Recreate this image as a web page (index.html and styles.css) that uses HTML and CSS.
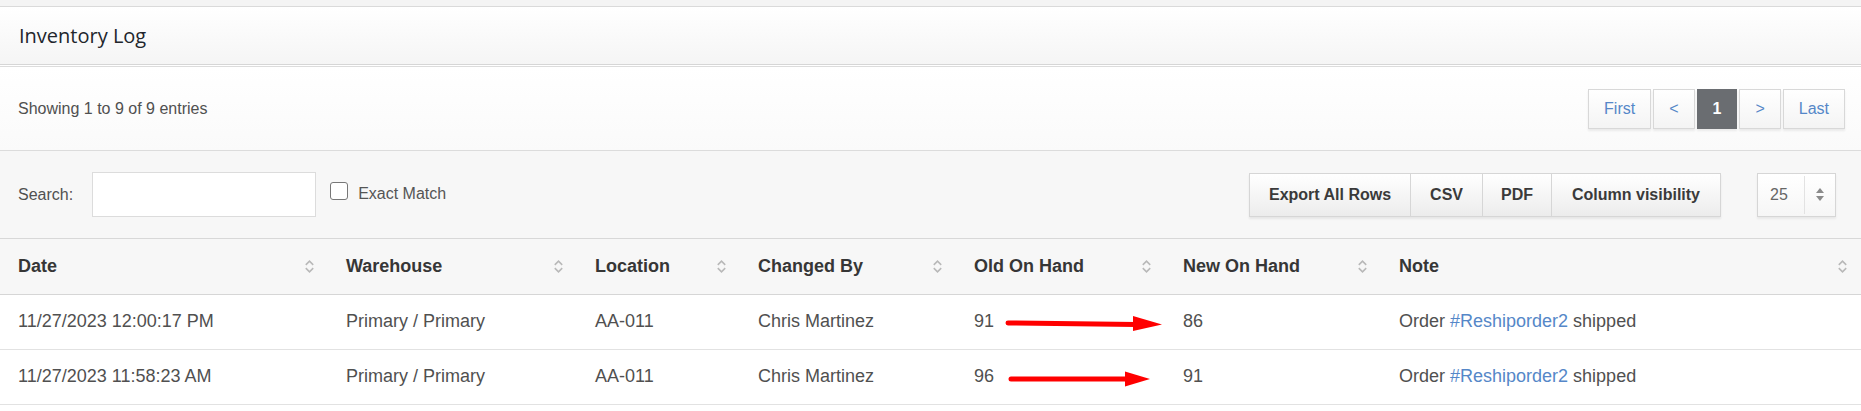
FILE: index.html
```html
<!DOCTYPE html>
<html lang="en">
<head>
    <meta charset="UTF-8">
    <meta name="viewport" content="width=device-width, initial-scale=1.0">
    <title>Inventory Log</title>
    <link rel="stylesheet" href="styles.css">
</head>
<body>
    <div class="panel">
        <div class="panel-heading">
            <h3>Inventory Log</h3>
        </div>

        <div class="panel-body">
            <div class="info-bar">
                <p class="info">Showing 1 to 9 of 9 entries</p>
                <ul class="pagination">
                    <li><a href="#">First</a></li>
                    <li><a href="#">&lt;</a></li>
                    <li class="active"><a href="#">1</a></li>
                    <li><a href="#">&gt;</a></li>
                    <li><a href="#">Last</a></li>
                </ul>
            </div>

            <div class="toolbar">
                <label class="search">Search: <input type="text"></label>
                <label class="exact"><span class="checkbox"></span>Exact Match</label>

                <div class="buttons">
                    <button>Export All Rows</button>
                    <button class="csv">CSV</button>
                    <button>PDF</button>
                    <button>Column visibility</button>
                </div>

                <div class="page-size">
                    <span class="value">25</span>
                    <span class="spinner"><i class="up"></i><i class="down"></i></span>
                </div>
            </div>

            <table class="log">
                <colgroup>
                    <col style="width: 328px">
                    <col style="width: 249px">
                    <col style="width: 163px">
                    <col style="width: 216px">
                    <col style="width: 209px">
                    <col style="width: 216px">
                    <col>
                </colgroup>
                <thead>
                    <tr>
                        <th><div class="th"><span>Date</span><svg class="sort" viewBox="0 0 10 16"><path d="M1.5 6.5 5 3l3.5 3.5M1.5 9.5 5 13l3.5-3.5"/></svg></div></th>
                        <th><div class="th"><span>Warehouse</span><svg class="sort" viewBox="0 0 10 16"><path d="M1.5 6.5 5 3l3.5 3.5M1.5 9.5 5 13l3.5-3.5"/></svg></div></th>
                        <th><div class="th"><span>Location</span><svg class="sort" viewBox="0 0 10 16"><path d="M1.5 6.5 5 3l3.5 3.5M1.5 9.5 5 13l3.5-3.5"/></svg></div></th>
                        <th><div class="th"><span>Changed By</span><svg class="sort" viewBox="0 0 10 16"><path d="M1.5 6.5 5 3l3.5 3.5M1.5 9.5 5 13l3.5-3.5"/></svg></div></th>
                        <th><div class="th"><span>Old On Hand</span><svg class="sort" viewBox="0 0 10 16"><path d="M1.5 6.5 5 3l3.5 3.5M1.5 9.5 5 13l3.5-3.5"/></svg></div></th>
                        <th><div class="th"><span>New On Hand</span><svg class="sort" viewBox="0 0 10 16"><path d="M1.5 6.5 5 3l3.5 3.5M1.5 9.5 5 13l3.5-3.5"/></svg></div></th>
                        <th><div class="th"><span>Note</span><svg class="sort" viewBox="0 0 10 16"><path d="M1.5 6.5 5 3l3.5 3.5M1.5 9.5 5 13l3.5-3.5"/></svg></div></th>
                    </tr>
                </thead>
                <tbody>
                    <tr>
                        <td>11/27/2023 12:00:17 PM</td>
                        <td>Primary / Primary</td>
                        <td>AA-011</td>
                        <td>Chris Martinez</td>
                        <td>91<svg class="arrow arrow-1" viewBox="0 0 159 18"><path class="shaft" d="M3 9 131 10.5"/><polygon points="128,2 157,10.5 128,17"/></svg></td>
                        <td>86</td>
                        <td>Order <a href="#">#Reshiporder2</a> shipped</td>
                    </tr>
                    <tr>
                        <td>11/27/2023 11:58:23 AM</td>
                        <td>Primary / Primary</td>
                        <td>AA-011</td>
                        <td>Chris Martinez</td>
                        <td>96<svg class="arrow arrow-2" viewBox="0 0 143 18"><path class="shaft" d="M3 9 120 9"/><polygon points="117,1.5 142,9 117,16.5"/></svg></td>
                        <td>91</td>
                        <td>Order <a href="#">#Reshiporder2</a> shipped</td>
                    </tr>
                </tbody>
            </table>
        </div>
    </div>
</body>
</html>
```

FILE: styles.css
```css
* {
    box-sizing: border-box;
    margin: 0;
    padding: 0;
}

body {
    background-color: #f4f4f4;
    font-family: "Liberation Sans", Arial, sans-serif;
    font-size: 16px;
    color: #505050;
    overflow: hidden;
}

a {
    color: #5587c8;
    text-decoration: none;
}

.panel {
    margin-top: 6px;
    border-top: 1px solid #dadada;
    background-color: #fff;
    padding-bottom: 8px;
}

.panel-heading {
    height: 58px;
    display: flex;
    align-items: center;
    padding: 0 19px 1px;
    background: linear-gradient(#ffffff, #f5f5f5);
    border-bottom: 1px solid #d6d6d6;
}

.panel-heading h3 {
    font-family: "Open Sans", sans-serif;
    font-weight: 400;
    font-size: 20px;
    color: #22262c;
}

.panel-body {
    margin-top: 1px;
    border-top: 1px solid #dcdcdc;
}

/* info + paging */
.info-bar {
    height: 84px;
    display: flex;
    align-items: center;
    justify-content: space-between;
    padding: 0 16px 0 18px;
    background: linear-gradient(#ffffff, #fafafa);
    border-bottom: 1px solid #dcdcdc;
}

.info {
    color: #505050;
}

.pagination {
    list-style: none;
    display: flex;
    gap: 2px;
}

.pagination a {
    display: flex;
    align-items: center;
    height: 40px;
    padding: 0 15px;
    border: 1px solid #d8d8d8;
    background: linear-gradient(#ffffff, #f4f4f4);
    box-shadow: 0 2px 2px rgba(0, 0, 0, 0.07);
}

.pagination .active a {
    background: #6a6d71;
    border-color: #6a6d71;
    color: #fff;
    font-weight: bold;
}

/* search + export */
.toolbar {
    height: 88px;
    display: flex;
    align-items: center;
    padding: 0 25px 0 18px;
    background-color: #f7f7f7;
    border-bottom: 1px solid #d8d8d8;
}

.search {
    display: flex;
    align-items: center;
    gap: 19px;
}

.search input {
    width: 224px;
    height: 45px;
    border: 1px solid #dcdcdc;
    background: #fff;
    outline: none;
}

.exact {
    display: flex;
    align-items: center;
    gap: 10px;
    margin-left: 14px;
    margin-top: -1px;
    color: #555;
}

.checkbox {
    width: 18px;
    height: 18px;
    border: 1.5px solid #777;
    border-radius: 3px;
    background: #fff;
    margin-top: -7px;
}

.buttons {
    display: flex;
    margin-left: auto;
    box-shadow: 0 2px 2px rgba(0, 0, 0, 0.07);
}

.buttons button {
    height: 44px;
    padding: 0 18px;
    border: 1px solid #d6d6d6;
    border-left: none;
    background: linear-gradient(#ffffff, #ececec);
    font-family: "Liberation Sans", Arial, sans-serif;
    font-size: 16px;
    font-weight: bold;
    color: #3a3a3a;
}

.buttons button:first-child {
    border-left: 1px solid #d6d6d6;
    padding: 0 19px;
}

.buttons .csv {
    padding: 0 19px;
}

.buttons button:last-child {
    padding: 0 20px;
}

.page-size {
    display: flex;
    align-items: center;
    width: 79px;
    height: 44px;
    margin-left: 36px;
    border: 1px solid #d6d6d6;
    background: linear-gradient(#ffffff, #f6f6f6);
    box-shadow: 0 2px 2px rgba(0, 0, 0, 0.06);
}

.page-size .value {
    width: 46px;
    padding-left: 12px;
    color: #666;
}

.spinner {
    flex: 1;
    height: 38px;
    border-left: 1px solid #e2e2e2;
    display: flex;
    flex-direction: column;
    align-items: center;
    justify-content: center;
    gap: 3px;
}

.spinner i {
    width: 0;
    height: 0;
    border-left: 4px solid transparent;
    border-right: 4px solid transparent;
}

.spinner .up {
    border-bottom: 5px solid #8a8a8a;
}

.spinner .down {
    border-top: 5px solid #8a8a8a;
}

/* table */
.log {
    width: 100%;
    table-layout: fixed;
    border-collapse: collapse;
    font-size: 18px;
}

.log th {
    height: 55px;
    padding: 0 13px 0 18px;
    background-color: #f7f7f7;
    border-bottom: 1px solid #d6d6d6;
    text-align: left;
    font-weight: bold;
    color: #363636;
}

.th {
    display: flex;
    align-items: center;
    justify-content: space-between;
}

.sort {
    width: 11px;
    height: 17px;
    fill: none;
    stroke: #b9b9b9;
    stroke-width: 1.5;
}

.log td {
    height: 55px;
    padding: 0 18px;
    border-bottom: 1px solid #e2e2e2;
    white-space: nowrap;
}

.arrow {
    height: 18px;
    vertical-align: middle;
}

.arrow-1 {
    width: 159px;
    margin: 0 0 -2px 11px;
}

.arrow-2 {
    width: 143px;
    margin: 0 0 -4px 14px;
}

.arrow .shaft {
    stroke: #ff0000;
    stroke-width: 5;
    stroke-linecap: round;
}

.arrow polygon {
    fill: #ff0000;
}
```
